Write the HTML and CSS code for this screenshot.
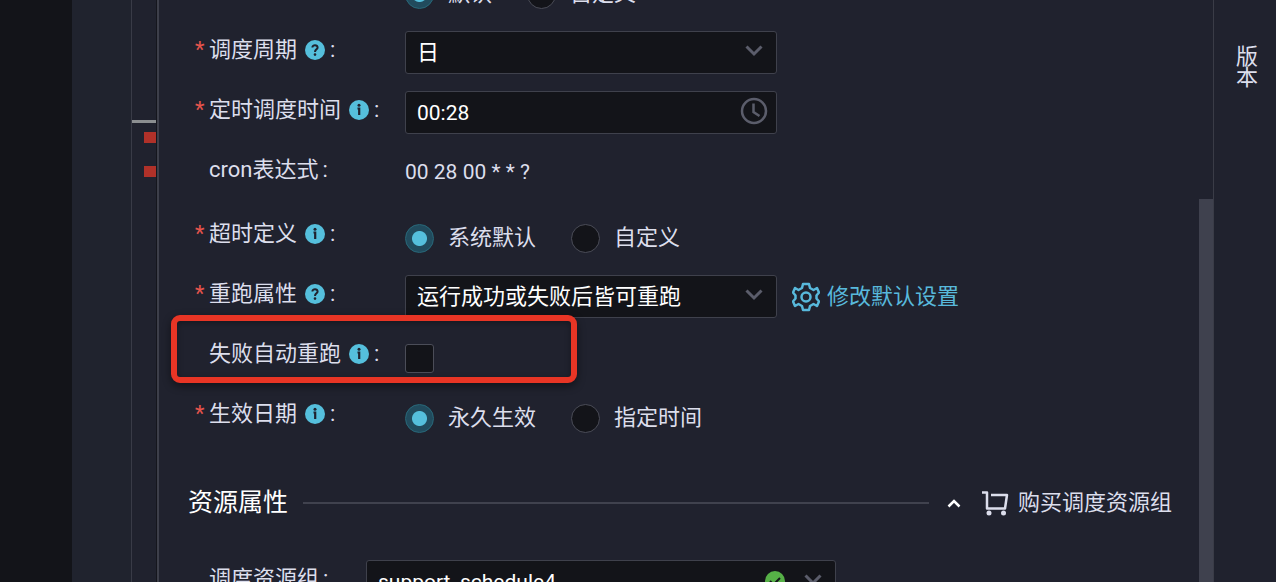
FILE: index.html
```html
<!DOCTYPE html>
<html lang="zh-CN">
<head>
<meta charset="utf-8">
<title>调度配置</title>
<link rel="stylesheet" href="styles.css">
</head>
<body>
<svg class="defs" aria-hidden="true">
  <symbol id="info" viewBox="0 0 20 20"><circle cx="10" cy="10" r="10" fill="#55bfdc"/><path d="M8.500 8.500h1.700v6.500" fill="none" stroke="#20222e" stroke-width="2.200"/><circle cx="10" cy="5.300" r="1.500" fill="#20222e"/></symbol>
  <symbol id="help" viewBox="0 0 20 20"><circle cx="10" cy="10" r="10" fill="#55bfdc"/><path d="M7.400 7.600C7.400 4.400 12.800 4.600 12.600 7.600C12.500 9.400 10 9.400 10 12" fill="none" stroke="#20222e" stroke-width="2"/><circle cx="10" cy="14.600" r="1.300" fill="#20222e"/></symbol>
  <symbol id="chevron" viewBox="0 0 18 12"><path d="M1.500 1.500L9 9L16.500 1.500" fill="none" stroke="currentColor" stroke-width="3"/></symbol>
</svg>
<div class="app">
  <div class="tree"></div>
  <div class="editor"></div>
  <div class="minimap"><div class="cursor-mark"></div><div class="error-mark"></div><div class="error-mark"></div></div>
  <form class="panel">
    <div class="field">
      <div class="label"></div>
      <div class="choices">
        <label class="choice"><input type="radio" name="param" checked>默认</label>
        <label class="choice"><input type="radio" name="param">自定义</label>
      </div>
    </div>
    <div class="field">
      <div class="label required"><label for="cycle">调度周期</label><svg class="tip"><use href="#help"/></svg><span>:</span></div>
      <div class="control"><div class="box"><select id="cycle"><option>日</option></select><svg class="arrow"><use href="#chevron"/></svg></div></div>
    </div>
    <div class="field">
      <div class="label required"><label for="time">定时调度时间</label><svg class="tip"><use href="#info"/></svg><span>:</span></div>
      <div class="control"><div class="box"><input class="text latin" id="time" type="text" value="00:28"><svg class="clock" viewBox="0 0 28 28"><circle cx="14" cy="14" r="12" fill="none" stroke="currentColor" stroke-width="2.500"/><path d="M13.500 6.500v8.500l6 4" fill="none" stroke="currentColor" stroke-width="2.500"/></svg></div></div>
    </div>
    <div class="field plain">
      <div class="label"><span>cron表达式</span><span>:</span></div>
      <div class="control"><output class="value latin">00 28 00 * * ?</output></div>
    </div>
    <div class="field">
      <div class="label required"><span>超时定义</span><svg class="tip"><use href="#info"/></svg><span>:</span></div>
      <div class="choices">
        <label class="choice"><input type="radio" name="timeout" checked>系统默认</label>
        <label class="choice"><input type="radio" name="timeout">自定义</label>
      </div>
    </div>
    <div class="field">
      <div class="label required"><label for="rerun">重跑属性</label><svg class="tip"><use href="#help"/></svg><span>:</span></div>
      <div class="control"><div class="box"><select id="rerun"><option>运行成功或失败后皆可重跑</option></select><svg class="arrow"><use href="#chevron"/></svg></div>
        <a class="settings" href="#"><svg class="gear" viewBox="0 0 28 30" fill="none" stroke="currentColor" stroke-width="2.500" stroke-linejoin="round"><path d="M11 2h6l1 4 3.500 2 3.500-2 2 4.500-2.500 3v3l2.500 3-2 4.500-3.500-2-3.500 2-1 4h-6l-1-4-3.500-2-3.500 2-2-4.500 2.500-3v-3l-2.500-3 2-4.500 3.500 2 3.500-2z"/><circle cx="14" cy="15" r="4.500"/></svg>修改默认设置</a></div>
    </div>
    <div class="field">
      <div class="label"><label for="auto">失败自动重跑</label><svg class="tip"><use href="#info"/></svg><span>:</span></div>
      <div class="choices"><input type="checkbox" id="auto"></div>
      <div class="highlight"></div>
    </div>
    <div class="field">
      <div class="label required"><span>生效日期</span><svg class="tip"><use href="#info"/></svg><span>:</span></div>
      <div class="choices">
        <label class="choice"><input type="radio" name="effective" checked>永久生效</label>
        <label class="choice"><input type="radio" name="effective">指定时间</label>
      </div>
    </div>
    <div class="section">
      <h2>资源属性</h2>
      <div class="rule"></div>
      <button class="collapse" type="button" aria-label="收起"><svg viewBox="0 0 14 10"><path d="M1.500 8.500L7 3l5.500 5.500" fill="none" stroke="currentColor" stroke-width="2.500"/></svg></button>
      <a class="buy" href="#"><svg class="cart" viewBox="0 0 28 26"><path d="M1 2.500h5V18.500h18L26 5H10" fill="none" stroke="currentColor" stroke-width="2.500" stroke-linejoin="round"/><circle cx="8" cy="23" r="2.500" fill="currentColor"/><circle cx="22.500" cy="23" r="2.500" fill="currentColor"/></svg>购买调度资源组</a>
    </div>
    <div class="field resource">
      <div class="label"><label for="group">调度资源组</label><span>:</span></div>
      <div class="control"><div class="box"><select class="latin" id="group"><option>support_schedule4</option></select><svg class="ok" viewBox="0 0 20 20"><circle cx="10" cy="10" r="10" fill="#56b047"/><path d="M5 10l3.500 3.500L15 7" fill="none" stroke="#14151b" stroke-width="2"/></svg><svg class="arrow"><use href="#chevron"/></svg></div></div>
    </div>
  </form>
  <div class="scroll"><div class="thumb"></div></div>
  <nav class="rail"><button type="button">版本</button></nav>
</div>
</body>
</html>
```
FILE: styles.css
```css
* { box-sizing: border-box; }
body {
  margin: 0;
  background: #20222e;
  color: #dcdeec;
  font: 22px/40px Roboto, "Noto Sans CJK SC", sans-serif;
}
button, input, select { font: inherit; color: inherit; margin: 0; }
a { text-decoration: none; color: inherit; }
svg { flex: none; }
.defs { position: absolute; width: 0; height: 0; }

.app { display: flex; height: 100vh; overflow: hidden; }
.tree { flex: none; width: 72px; background: #131419; }
.editor { flex: none; width: 60px; background: #20232e; border-right: 1px solid #393b47; }
.minimap {
  flex: none;
  display: flex;
  flex-direction: column;
  align-items: flex-end;
  width: 24px;
  padding-top: 120px;
}
.cursor-mark { width: 100%; height: 3px; margin-bottom: 9px; background: #8b8e90; }
.error-mark { width: 12px; height: 11px; margin-bottom: 23px; background: #b03129; }

.panel {
  flex: 1;
  min-width: 0;
  border-left: 2px solid #3d3f4a;
  box-shadow: -1px 0 #15161d;
  margin-left: 1px;
}
.field { position: relative; display: flex; align-items: flex-start; height: 60px; padding-left: 50px; }
.field:first-child { margin-top: -30px; }
.field.plain { height: 64px; }
.label { position: relative; flex: none; display: flex; align-items: center; width: 196px; height: 40px; white-space: nowrap; }
.required::before { content: "*"; position: absolute; left: -14px; color: #e5544c; }
.tip { width: 20px; height: 20px; margin: 0 5px 0 8px; }
.plain .label, .resource .label { gap: 4px; }
.control { display: flex; align-items: center; padding-top: 1px; }
.box { position: relative; width: 372px; }
.box select, .text {
  display: block;
  appearance: none;
  width: 100%;
  height: 43px;
  padding: 0 48px 0 11px;
  border: 1px solid #3f414c;
  border-radius: 3px;
  background: #131419;
  color: #fff;
}
.box .latin, .latin { font-size: 21px; }
.arrow { position: absolute; right: 14px; top: 14px; width: 18px; height: 12px; color: #5b5d6b; pointer-events: none; }
.clock { position: absolute; right: 9px; top: 6px; width: 28px; height: 28px; color: #5b5d6b; }
.value { line-height: 43px; }
.settings { display: flex; align-items: center; gap: 7px; margin-left: 15px; color: #58b9dc; white-space: nowrap; }
.gear { width: 28px; height: 30px; }

.choices { display: flex; align-items: center; gap: 35px; height: 48px; }
.choice { display: flex; align-items: center; gap: 14px; white-space: nowrap; }
input[type="radio"], input[type="checkbox"] {
  appearance: none;
  flex: none;
  width: 29px;
  height: 29px;
  border: 1px solid #4b4d58;
  border-radius: 50%;
  background: #131419;
}
input[type="checkbox"] { border-radius: 3px; }
input[type="radio"]:checked {
  border-color: #28697a;
  background: radial-gradient(circle, #55bfdc 7px, #214b5d 8px);
}
.highlight {
  position: absolute;
  left: 12px;
  top: -19px;
  width: 406px;
  height: 68px;
  border: 6px solid #e83525;
  border-radius: 9px;
  box-shadow: 0 3px 8px #0007, inset 0 2px 6px #0005;
  pointer-events: none;
}

.section { display: flex; align-items: center; height: 97px; margin-bottom: 8px; padding: 0 27px 0 29px; white-space: nowrap; }
.section h2 { margin: 0; font-size: 25px; font-weight: 400; color: #fff; }
.rule { flex: 1; height: 2px; margin: 0 18px 0 15px; background: #40424e; }
.collapse { display: flex; padding: 0; border: 0; background: none; color: #fff; }
.collapse svg { width: 14px; height: 10px; }
.buy { display: flex; align-items: center; gap: 9px; margin-left: 20px; }
.cart { width: 28px; height: 26px; }
.resource .label { width: 157px; }
.resource .box { width: 470px; }
.ok { position: absolute; right: 51px; top: 11px; width: 20px; height: 20px; }

.scroll { flex: none; width: 14px; padding-top: 199px; }
.thumb { height: 100%; background: #3f414e; }
.rail { flex: none; width: 63px; padding: 46px 16px 0 22px; border-left: 1px solid #3a3c47; }
.rail button { width: 22px; padding: 0; border: 0; background: none; line-height: 21px; white-space: normal; word-break: break-all; }
```
